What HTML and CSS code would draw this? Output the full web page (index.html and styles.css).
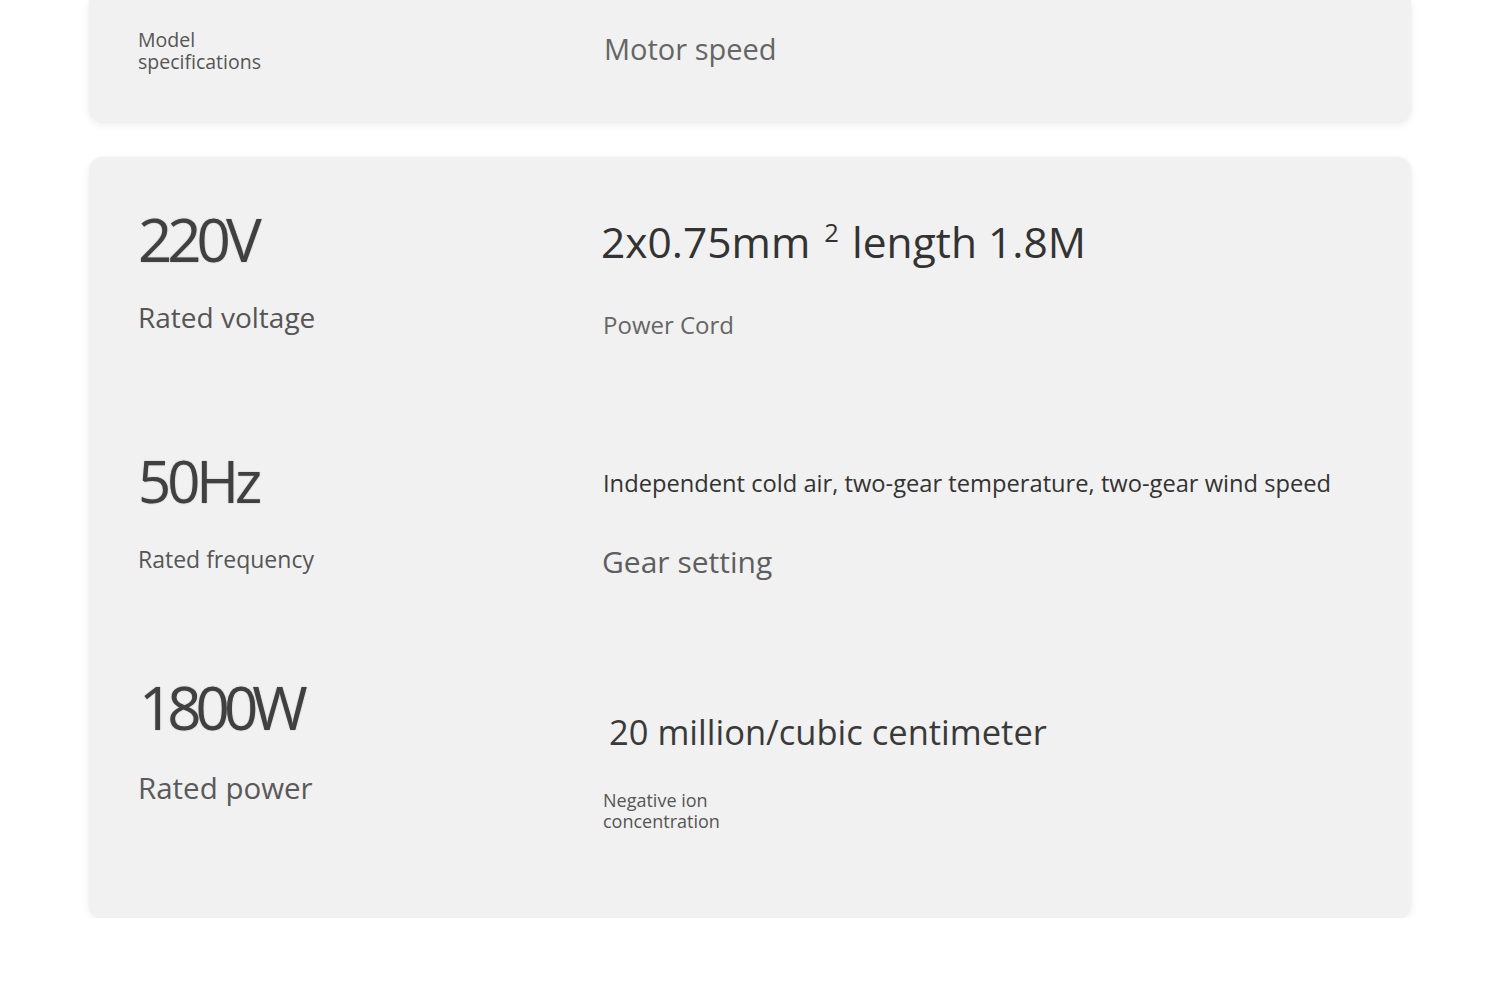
FILE: index.html
```html
<!DOCTYPE html>
<html lang="en">
<head>
<meta charset="utf-8">
<title>Specifications</title>
<link rel="stylesheet" href="styles.css">
</head>
<body>
<div class="page">
  <section class="card card-top">
    <div class="spec-grid top-grid">
      <div class="cell">
        <div class="label-sm">
          <span class="line">Model</span>
          <span class="line">specifications</span>
        </div>
      </div>
      <div class="cell">
        <div class="label-md motor">Motor speed</div>
      </div>
    </div>
  </section>

  <section class="card card-main">
    <div class="spec-grid main-grid">
      <div class="cell r1l">
        <div class="big v1">220V</div>
        <div class="label l-voltage">Rated voltage</div>
      </div>
      <div class="cell r1r">
        <div class="value v-cord">2x0.75mm <sup class="sq">2</sup> length 1.8M</div>
        <div class="label l-cord">Power Cord</div>
      </div>

      <div class="cell r2l">
        <div class="big v2">50Hz</div>
        <div class="label l-freq">Rated frequency</div>
      </div>
      <div class="cell r2r">
        <div class="value v-gear">Independent cold air, two-gear temperature, two-gear wind speed</div>
        <div class="label l-gear">Gear setting</div>
      </div>

      <div class="cell r3l">
        <div class="big v3">1800W</div>
        <div class="label l-power">Rated power</div>
      </div>
      <div class="cell r3r">
        <div class="value v-ion">20 million/cubic centimeter</div>
        <div class="label l-ion">
          <span class="line">Negative ion</span>
          <span class="line">concentration</span>
        </div>
      </div>
    </div>
  </section>
</div>
</body>
</html>
```

FILE: styles.css
```css
html, body {
  margin: 0;
  padding: 0;
  background: #ffffff;
}

body {
  font-family: "Open Sans", "Noto Sans", "DejaVu Sans", sans-serif;
  color: #444;
}

.page {
  display: flex;
  flex-direction: column;
  gap: 35px;
  padding: 0 89px;
}

.card {
  background: #f1f1f1;
  border-radius: 14px;
  box-shadow: 0 3px 8px rgba(0, 0, 0, 0.07), 0 0 3px rgba(0, 0, 0, 0.04);
}

.card-top {
  height: 122px;
  border-top-left-radius: 0;
  border-top-right-radius: 0;
}

.card-main {
  height: 761px;
}

.spec-grid {
  display: grid;
  grid-template-columns: 465px 1fr;
  padding: 0 49px;
}

.main-grid {
  grid-template-rows: 243px 240px 278px;
}

.cell {
  display: flex;
  flex-direction: column;
  align-items: flex-start;
}

.line {
  display: block;
  height: 22px;
  overflow: visible;
}

/* top card */
.label-sm {
  font-size: 19.5px;
  line-height: 22px;
  color: #555;
  margin-top: 29px;
}

.label-md {
  font-size: 29px;
  line-height: 29px;
  color: #666;
}

.motor {
  margin-top: 34px;
  margin-left: 1px;
}

/* big numbers */
.big {
  font-size: 60px;
  line-height: 60px;
  font-weight: 500;
  color: #404040;
  letter-spacing: -5px;
  text-shadow: 0 0 1.5px rgba(0, 0, 0, 0.3);
}

.v1 { margin-top: 52px; }
.v2 { margin-top: 52px; font-size: 58px; line-height: 58px; letter-spacing: -4px; }
.v3 { margin-top: 37px; margin-left: 1px; letter-spacing: -6px; }

.label {
  color: #555;
}

.l-voltage {
  font-size: 28px;
  line-height: 28px;
  margin-top: 34px;
}

.l-freq {
  font-size: 23px;
  line-height: 23px;
  margin-top: 38px;
}

.l-power {
  font-size: 29.5px;
  line-height: 29.5px;
  margin-top: 36px;
  color: #5a5a5a;
}

/* right column */
.value {
  color: #333;
}

.v-cord {
  font-size: 42.5px;
  line-height: 42.5px;
  margin-top: 64px;
  margin-left: -2px;
}

.sq {
  font-size: 0.6em;
  vertical-align: 0;
  position: relative;
  top: -0.62em;
  line-height: 0;
  margin: 0 2px 0 3px;
}

.l-cord {
  font-size: 24px;
  line-height: 24px;
  margin-top: 49px;
  color: #666;
}

.v-gear {
  font-size: 23.7px;
  line-height: 24px;
  margin-top: 71px;
}

.l-gear {
  font-size: 30px;
  line-height: 30px;
  margin-top: 52px;
  color: #5e5e5e;
  margin-left: -1px;
}

.v-ion {
  font-size: 34.5px;
  line-height: 34.5px;
  margin-top: 75px;
  margin-left: 6px;
  color: #3a3a3a;
}

.l-ion {
  font-size: 18px;
  line-height: 21px;
  margin-top: 40px;
}

.l-ion .line {
  height: 21px;
}
```
